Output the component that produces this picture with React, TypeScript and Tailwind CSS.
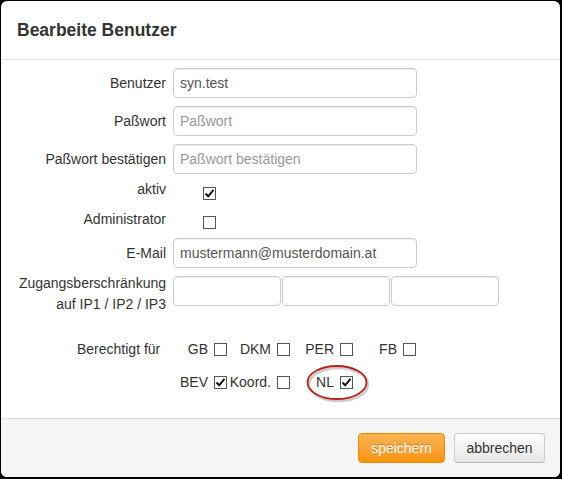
import React from "react";

const font = { fontFamily: '"Liberation Sans", Arial, sans-serif' };

function Check({ checked }: { checked?: boolean }) {
  return (
    <div className="w-[13px] h-[13px] border border-[#555] bg-white shrink-0 flex items-center justify-center">
      {checked && (
        <svg width="11" height="11" viewBox="0 0 11 11">
          <path d="M1.5 5.5 L4.2 8.3 L9.5 1.8" fill="none" stroke="#111" strokeWidth="2" />
        </svg>
      )}
    </div>
  );
}

function TextInput({ value, placeholder, w = "w-[244px]" }: { value?: string; placeholder?: string; w?: string }) {
  return (
    <div
      className={`${w} h-[30px] border border-[#ccc] rounded-[4px] bg-white px-[6px] flex items-center text-[14px] shadow-[inset_0_1px_1px_rgba(0,0,0,0.075)]`}
    >
      {value ? <span className="text-[#555]">{value}</span> : <span className="text-[#999]">{placeholder}</span>}
    </div>
  );
}

function Label({ children }: { children: React.ReactNode }) {
  return <div className="w-[165px] shrink-0 text-right text-[14px] text-[#333] leading-[20px]">{children}</div>;
}

function Perm({ label, checked, children }: { label: string; checked?: boolean; children?: React.ReactNode }) {
  return (
    <div className="relative w-[63px] flex items-center justify-end gap-[6px] text-[14px] text-[#333] leading-[20px]">
      <span>{label}</span>
      <Check checked={checked} />
      {children}
    </div>
  );
}

export default function App() {
  return (
    <div className="w-[562px] h-[479px] bg-black pt-px pl-px pr-[2px] pb-[2px]" style={font}>
      <div className="w-full h-full bg-white rounded-[6px] overflow-hidden flex flex-col">
        <div className="h-[59px] border-b border-[#e5e5e5] flex items-center pl-[16px] shrink-0">
          <h3 className="text-[17.5px] font-bold text-[#333]">Bearbeite Benutzer</h3>
        </div>
        <div className="flex-1 pt-[8px] flex flex-col">
          <div className="flex items-center gap-[7px] h-[30px]">
            <Label>Benutzer</Label>
            <TextInput value="syn.test" />
          </div>
          <div className="flex items-center gap-[7px] h-[30px] mt-[8px]">
            <Label>Paßwort</Label>
            <TextInput placeholder="Paßwort" />
          </div>
          <div className="flex items-center gap-[7px] h-[30px] mt-[8px]">
            <Label>Paßwort bestätigen</Label>
            <TextInput placeholder="Paßwort bestätigen" />
          </div>
          <div className="flex items-start gap-[7px] h-[20px] mt-[5px]">
            <Label>aktiv</Label>
            <div className="ml-[30px] mt-[8px]">
              <Check checked />
            </div>
          </div>
          <div className="flex items-start gap-[7px] h-[20px] mt-[10px]">
            <Label>Administrator</Label>
            <div className="ml-[30px] mt-[7px]">
              <Check />
            </div>
          </div>
          <div className="flex items-center gap-[7px] h-[30px] mt-[9px]">
            <Label>E-Mail</Label>
            <TextInput value="mustermann@musterdomain.at" />
          </div>
          <div className="flex items-start gap-[7px] mt-[5px]">
            <div className="w-[165px] shrink-0 text-right text-[14px] text-[#333] leading-[21px]">
              Zugangsberschränkung
              <br />
              auf IP1 / IP2 / IP3
            </div>
            <div className="flex gap-[1px] mt-[3px]">
              <TextInput w="w-[108px]" />
              <TextInput w="w-[108px]" />
              <TextInput w="w-[108px]" />
            </div>
          </div>
          <div className="flex items-center h-[20px] mt-[24px]">
            <div className="w-[163px] shrink-0 pl-[76px] text-[14px] text-[#333] leading-[20px]">Berechtigt für</div>
            <Perm label="GB" />
            <Perm label="DKM" />
            <Perm label="PER" />
            <Perm label="FB" />
          </div>
          <div className="flex items-center h-[20px] mt-[13px]">
            <div className="w-[163px] shrink-0" />
            <Perm label="BEV" checked />
            <Perm label="Koord." />
            <Perm label="NL" checked>
              <svg
                className="absolute left-[15px] top-[-9px] pointer-events-none"
                width="66"
                height="40"
                viewBox="0 0 66 40"
              >
                <ellipse cx="32" cy="19.5" rx="29.5" ry="16.5" fill="none" stroke="#a8a8a8" strokeWidth="2.5" opacity="0.6" transform="translate(1.5 2)" />
                <ellipse cx="32" cy="19.5" rx="29.5" ry="16.5" fill="none" stroke="#b3261e" strokeWidth="1.8" />
              </svg>
            </Perm>
          </div>
        </div>
        <div className="h-[59px] shrink-0 border-t border-[#ddd] bg-[#f5f5f5] flex items-center justify-end pr-[15px] gap-[9px]">
          <button className="h-[30px] w-[87px] rounded-[4px] border border-[#e8890a] bg-gradient-to-b from-[#fbb450] to-[#f89406] text-white text-[14px] [text-shadow:0_-1px_0_rgba(0,0,0,0.25)]">
            speichern
          </button>
          <button className="h-[30px] w-[91px] rounded-[4px] border border-[#ccc] border-b-[#b3b3b3] bg-gradient-to-b from-white to-[#e6e6e6] text-[#333] text-[14px]">
            abbrechen
          </button>
        </div>
      </div>
    </div>
  );
}
